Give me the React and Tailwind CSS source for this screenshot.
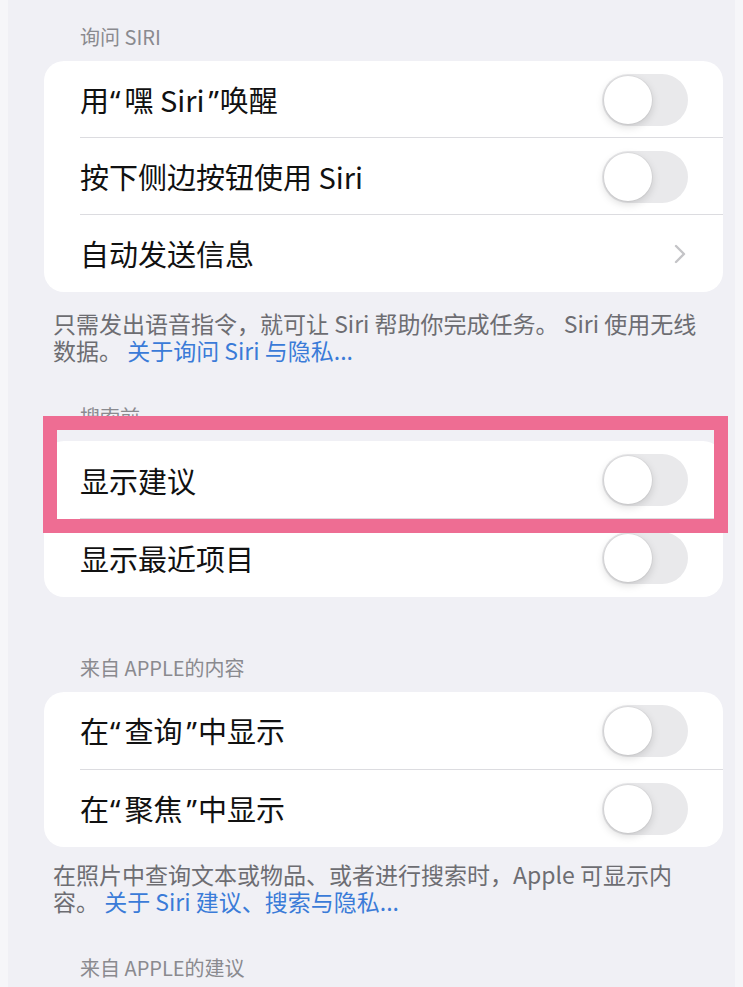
// Siri & Search settings page: grouped lists with switches
const font = 'font-["Noto_Sans_CJK_SC","Noto_Sans",sans-serif]';

// curly quotes set in a Latin face so they stay narrow
const Open = () => <span className='pl-[1px] pr-[4px] font-["Noto_Sans",sans-serif]'>“</span>;
const Close = () => <span className='pl-[4px] pr-[1px] font-["Noto_Sans",sans-serif]'>”</span>;

function Switch() {
  return (
    <div className="relative h-[52px] w-[86px] shrink-0 rounded-full bg-[#e9e9eb]">
      <div className="absolute left-[2px] top-[2px] h-[48px] w-[48px] rounded-full bg-white shadow-[0_3px_8px_rgba(0,0,0,0.15),0_0_0_1px_rgba(0,0,0,0.04)]" />
    </div>
  );
}

function Chevron() {
  return (
    <svg width="14" height="22" viewBox="0 0 14 22" className="mr-[1px]">
      <polyline
        points="3,3 11,11 3,19"
        fill="none"
        stroke="#c4c4c7"
        strokeWidth="2.4"
        strokeLinecap="round"
        strokeLinejoin="round"
      />
    </svg>
  );
}

function Row({ label, last, chevron, h = 'h-[77px]' }) {
  return (
    <div className={`relative flex ${h} items-center justify-between pl-[36px] pr-[35px]`}>
      <span className="text-[29px] leading-none text-[#111]">{label}</span>
      {chevron ? <Chevron /> : <Switch />}
      {!last && <div className="absolute bottom-0 left-[36px] right-0 h-px bg-[#dcdce0]" />}
    </div>
  );
}

function Header({ children }) {
  return (
    <div className="flex h-[48px] items-center pl-[36px] text-[20px] leading-none text-[#8a8a8f]">
      {children}
    </div>
  );
}

function Card({ children }) {
  return <div className="overflow-hidden rounded-[20px] bg-white">{children}</div>;
}

function Footer({ lines }) {
  return (
    <div className="pl-[9px] text-[23px] text-[#6d6d72]">
      {lines.map((line, i) => (
        <div key={i} className="h-[27px] leading-[27px]">
          {line}
        </div>
      ))}
    </div>
  );
}

const Link = ({ children }) => <span className="text-[#3a7bd8]">{children}</span>;

export default function App() {
  return (
    <div className={`flex min-h-[987px] w-full bg-[#f0f0f5] ${font}`}>
      <div className="w-[8px] shrink-0 bg-[#f6f6f9]" />
      <main className="flex-1 pl-[36px] pr-[12px] pt-[13px]">
        <Header>询问 SIRI</Header>
        <Card>
          <Row label={<>用<Open />嘿 Siri<Close />唤醒</>} />
          <Row label="按下侧边按钮使用 Siri" />
          <Row label="自动发送信息" chevron last />
        </Card>
        <div className="pt-[18px]">
          <Footer
            lines={[
              '只需发出语音指令，就可让 Siri 帮助你完成任务。 Siri 使用无线',
              <>数据。 <Link>关于询问 Siri 与隐私...</Link></>,
            ]}
          />
        </div>

        <div className="mt-[29px]">
          <Header>搜索前</Header>
          <div className="relative">
            <Card>
              <Row label="显示建议" h="h-[78px]" />
              <Row label="显示最近项目" h="h-[78px]" last />
            </Card>
            {/* highlight frame around the first row */}
            <div className="absolute -left-[1px] -top-[25px] h-[117px] w-[685px] border-[14px] border-[#ee6d93]" />
          </div>
        </div>

        <div className="mt-[47px]">
          <Header>来自 APPLE的内容</Header>
          <Card>
            <Row label={<>在<Open />查询<Close />中显示</>} h="h-[78px]" />
            <Row label={<>在<Open />聚焦<Close />中显示</>} last />
          </Card>
        </div>
        <div className="pt-[14px]">
          <Footer
            lines={[
              '在照片中查询文本或物品、或者进行搜索时，Apple 可显示内',
              <>容。 <Link>关于 Siri 建议、搜索与隐私...</Link></>,
            ]}
          />
        </div>

        <div className="mt-[29px]">
          <Header>来自 APPLE的建议</Header>
        </div>
      </main>
      <div className="w-[8px] shrink-0 bg-[#f6f6f9]" />
    </div>
  );
}
